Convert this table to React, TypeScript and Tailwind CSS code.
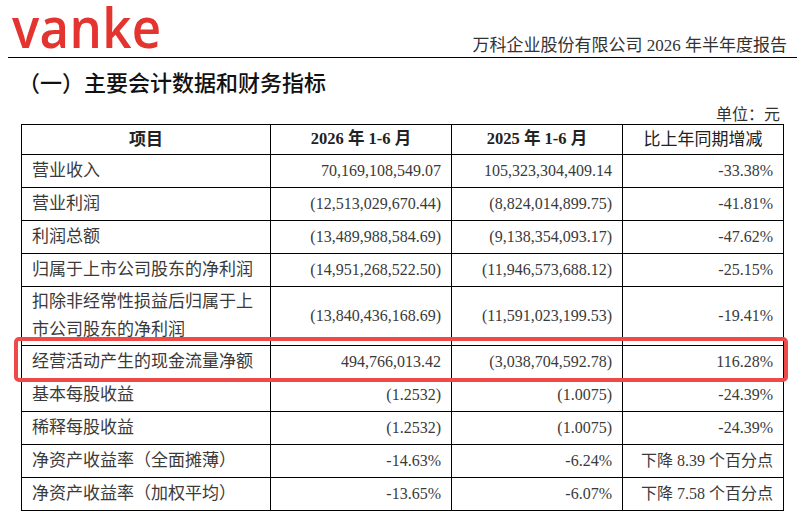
import React from "react";

const SERIF = "font-['Liberation_Serif','Noto_Sans_CJK_SC',serif]";

type Row = { label: string; a: string; b: string; c: string; tall?: boolean };

const ROWS: Row[] = [
  { label: "营业收入", a: "70,169,108,549.07", b: "105,323,304,409.14", c: "-33.38%" },
  { label: "营业利润", a: "(12,513,029,670.44)", b: "(8,824,014,899.75)", c: "-41.81%" },
  { label: "利润总额", a: "(13,489,988,584.69)", b: "(9,138,354,093.17)", c: "-47.62%" },
  { label: "归属于上市公司股东的净利润", a: "(14,951,268,522.50)", b: "(11,946,573,688.12)", c: "-25.15%" },
  {
    label: "扣除非经常性损益后归属于上市公司股东的净利润",
    a: "(13,840,436,168.69)",
    b: "(11,591,023,199.53)",
    c: "-19.41%",
    tall: true,
  },
  { label: "经营活动产生的现金流量净额", a: "494,766,013.42", b: "(3,038,704,592.78)", c: "116.28%" },
  { label: "基本每股收益", a: "(1.2532)", b: "(1.0075)", c: "-24.39%" },
  { label: "稀释每股收益", a: "(1.2532)", b: "(1.0075)", c: "-24.39%" },
  { label: "净资产收益率（全面摊薄）", a: "-14.63%", b: "-6.24%", c: "下降 8.39 个百分点" },
  { label: "净资产收益率（加权平均）", a: "-13.65%", b: "-6.07%", c: "下降 7.58 个百分点" },
];

function Header() {
  return (
    <header className="flex items-end justify-between h-[58px] ml-[8px] mr-[4px] border-b border-black">
      <span className="pl-[4px] mb-[7px] text-[51px] leading-[44px] text-[#e3342f] font-['Open_Sans',sans-serif] font-semibold tracking-[0.3px] origin-bottom scale-y-[1.1] inline-block">
        vanke
      </span>
      <span className={`${SERIF} pr-[10px] pb-[3px] text-[17px] leading-none text-[#333]`}>
        万科企业股份有限公司 2026 年半年度报告
      </span>
    </header>
  );
}

function Table() {
  const td = "border border-black px-[10px] text-right text-[16px] align-middle";
  return (
    <div className="relative ml-[21px] w-[762px]">
      <table className={`${SERIF} w-full table-fixed border-collapse text-[#3a3a3a]`}>
        <colgroup>
          <col className="w-[249px]" />
          <col className="w-[181px]" />
          <col className="w-[171px]" />
          <col className="w-[161px]" />
        </colgroup>
        <thead>
          <tr className="h-[30px] text-[#222]">
            <th className="border border-black text-[17px] font-bold">项目</th>
            <th className="border border-black text-[16.5px] font-bold">2026 年 1-6 月</th>
            <th className="border border-black text-[16.5px] font-bold">2025 年 1-6 月</th>
            <th className="border border-black text-[17px] font-normal">比上年同期增减</th>
          </tr>
        </thead>
        <tbody>
          {ROWS.map((r) => (
            <tr key={r.label} className={r.tall ? "h-[59px]" : "h-[33px]"}>
              <td
                className={`border border-black pl-[10px] pr-[12px] text-left text-[17px] align-middle ${
                  r.tall ? "leading-[28px] text-justify" : "leading-tight"
                }`}
              >
                {r.label}
              </td>
              <td className={td}>{r.a}</td>
              <td className={td}>{r.b}</td>
              <td className={td}>{r.c}</td>
            </tr>
          ))}
        </tbody>
      </table>
      <div className="absolute left-[-7px] top-[213px] w-[774px] h-[45px] border-[4px] border-[#ee4a4a] rounded-[5px] pointer-events-none" />
    </div>
  );
}

export default function App() {
  return (
    <div className="w-[801px] h-[528px] bg-white overflow-hidden">
      <Header />
      <h2 className="mt-[11px] ml-[18px] text-[22px] leading-[24px] text-[#111] font-['Noto_Sans_CJK_SC',sans-serif] font-medium">
        （一）主要会计数据和财务指标
      </h2>
      <div className={`${SERIF} mt-[13px] pr-[21px] text-right text-[16px] leading-[18px] text-[#333]`}>
        单位：元
      </div>
      <Table />
    </div>
  );
}
